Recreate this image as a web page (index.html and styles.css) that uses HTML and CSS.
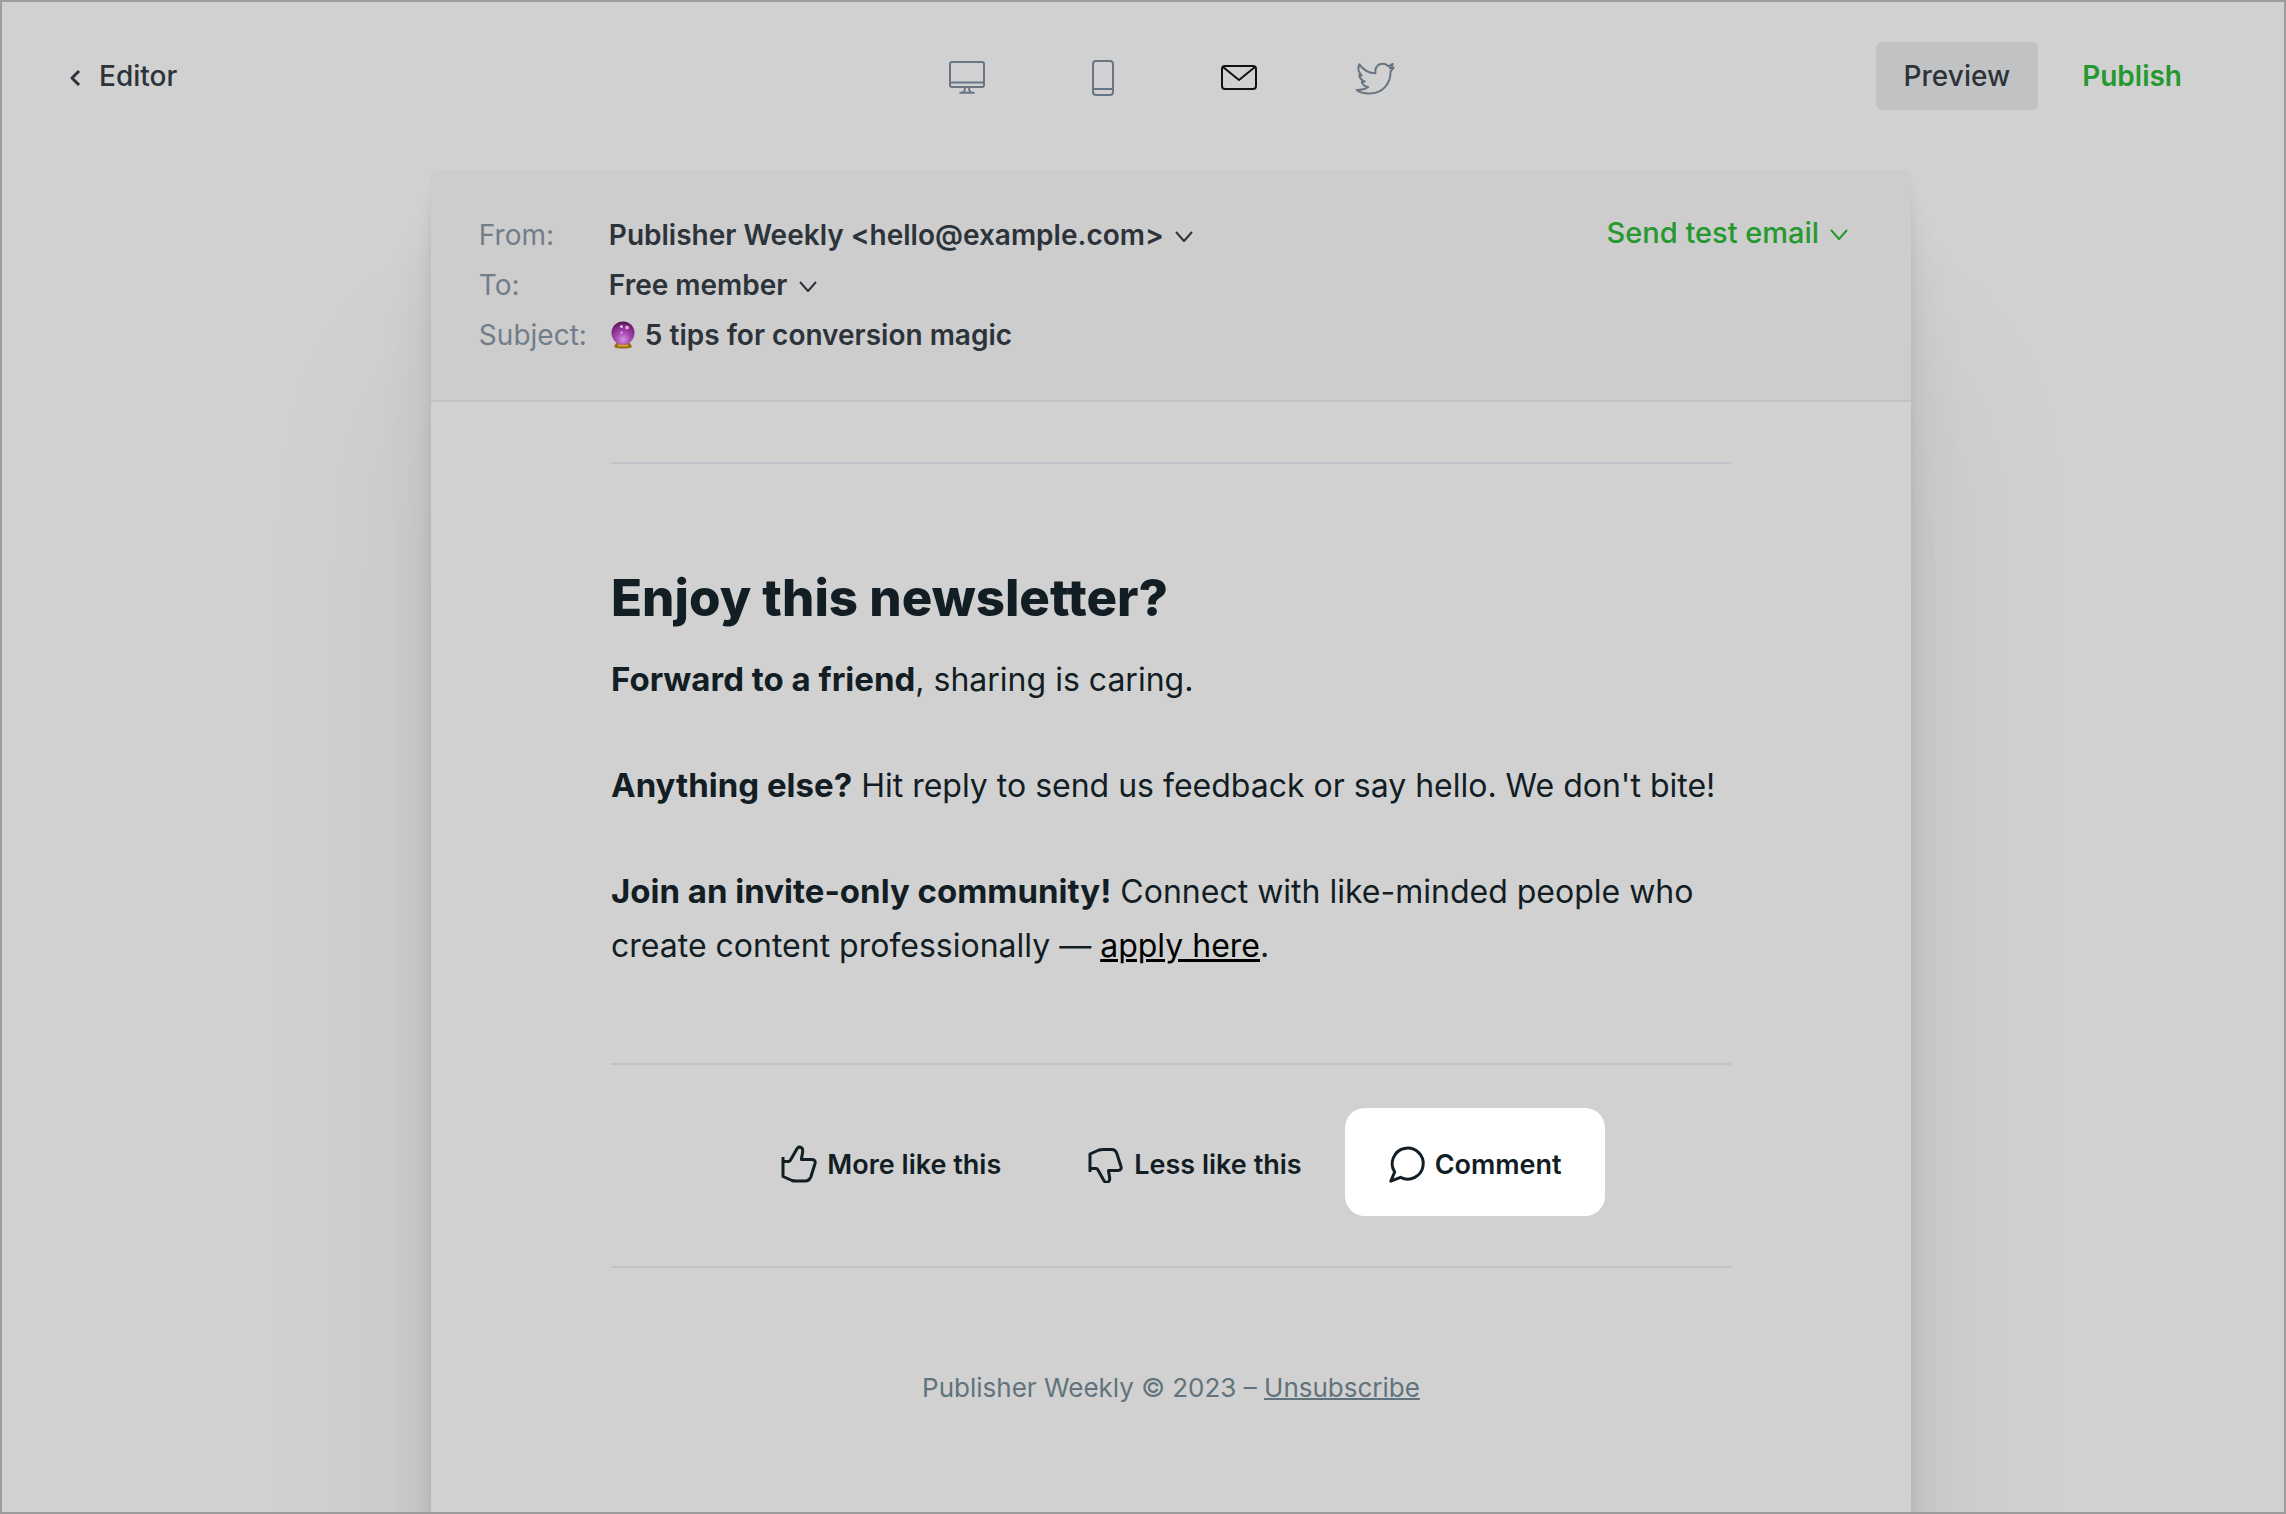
FILE: index.html
```html
<!DOCTYPE html>
<html lang="en">
<head>
    <meta charset="UTF-8">
    <meta name="viewport" content="width=device-width, initial-scale=1.0">
    <title>Email preview</title>
    <link rel="stylesheet" href="styles.css">
</head>
<body>

    <header class="topbar">
        <a class="back" href="#editor">
            <svg width="12" height="18" viewBox="0 0 12 18"><path d="M10 2 3 9l7 7"/></svg>
            Editor
        </a>

        <nav class="devices">
            <button type="button" aria-label="Desktop">
                <svg width="40" height="40" viewBox="0 0 40 40">
                    <rect x="3" y="4" width="34" height="25" rx="2"/>
                    <path d="M3 24.500h34M18 29.500c0 3-1 5-3 5M22 29.500c0 3 1 5 3 5M12.500 34.800h15"/>
                </svg>
            </button>
            <button type="button" aria-label="Mobile">
                <svg width="40" height="40" viewBox="0 0 40 40">
                    <rect x="10" y="3" width="20" height="34" rx="3"/>
                    <path d="M10 31h20"/>
                </svg>
            </button>
            <button type="button" class="active" aria-label="Email">
                <svg width="40" height="40" viewBox="0 0 40 40">
                    <rect x="3" y="8" width="34" height="23" rx="3"/>
                    <path d="M4 9l16 13L36 9"/>
                </svg>
            </button>
            <button type="button" aria-label="Twitter">
                <svg width="40" height="40" viewBox="0 0 40 40">
                    <path d="M4.300 6.300C8 11.500 13 15 20.500 15.300 19.500 9.500 23 5.700 27.500 5.700c2.500 0 4.500.8 6 2.600L37.700 6l-.9 3 1.900.7-3.200 3.800C36 25 28 35.500 14 35.500c-5 0-9.500-1.200-12.300-3.500 4 .3 8-.5 11.500-3-3.200-.5-5.700-2-6.500-5l3-.5C6.500 22 4.300 20 4.300 17l2.500.5C3 14 2.300 10.500 4.300 6.300z"/>
                    <path d="M34 10h3"/>
                </svg>
            </button>
        </nav>

        <div class="actions">
            <button type="button" class="preview">Preview</button>
            <button type="button" class="publish">Publish</button>
        </div>
    </header>

    <main class="email">
        <div class="email-header">
            <div class="fields">
                <div class="field">
                    <label for="from">From:</label>
                    <select id="from"><option>Publisher Weekly &lt;hello@example.com&gt;</option></select>
                    <svg class="chevron" width="20" height="14" viewBox="0 0 20 14"><path d="M2 3l8 9 8-9"/></svg>
                </div>
                <div class="field">
                    <label for="to">To:</label>
                    <select id="to"><option>Free member</option></select>
                    <svg class="chevron" width="20" height="14" viewBox="0 0 20 14"><path d="M2 3l8 9 8-9"/></svg>
                </div>
                <div class="field">
                    <span class="name">Subject:</span>
                    <svg class="ball" width="28" height="28" viewBox="0 0 28 28">
                        <defs>
                            <radialGradient id="glass" cx="50%" cy="78%" r="75%">
                                <stop offset="0" stop-color="#d294d8"/>
                                <stop offset="0.400" stop-color="#a94bb5"/>
                                <stop offset="0.800" stop-color="#802781"/>
                                <stop offset="1" stop-color="#521450"/>
                            </radialGradient>
                        </defs>
                        <path d="M7 22h14l2 4c-4 2-14 2-18 0z" fill="#9a6b14"/>
                        <path d="M9 24.500h10" stroke="#d2a33c" stroke-width="2"/>
                        <circle cx="14" cy="12" r="11.500" fill="url(#glass)"/>
                        <circle cx="12.500" cy="5.500" r="1.500" fill="#e6c4e6"/>
                        <circle cx="18" cy="6.500" r="2" fill="#d9a5da"/>
                        <circle cx="12.500" cy="11.500" r="1" fill="#e6c4e6"/>
                    </svg>
                    <span class="value">5 tips for conversion magic</span>
                </div>
            </div>
            <button type="button" class="send-test">
                Send test email
                <svg class="chevron" width="20" height="14" viewBox="0 0 20 14"><path d="M2 3l8 9 8-9"/></svg>
            </button>
        </div>

        <article class="content">
            <section class="message">
                <h1>Enjoy this newsletter?</h1>
                <p><strong>Forward to a friend</strong>, sharing is caring.</p>
                <p><strong>Anything else?</strong> Hit reply to send us feedback or say hello. We don't bite!</p>
                <p><strong>Join an invite-only community!</strong> Connect with like-minded people who create content professionally — <a href="#apply">apply here</a>.</p>
            </section>

            <div class="feedback">
                <button type="button">
                    <svg width="38" height="38" viewBox="0 0 38 38"><path d="M3 12v19.500l9 4c1.200.5 2.500.5 4 .5h9c3 0 5-1.500 6-4.500l4-13c.7-2.500-.5-4-3-4H21.500c0-3 1.200-5.500 1.200-9 0-3.500-4-4.500-5.700-1.800L10.500 15c-.5 1-1.200 1.500-2 1.500H3"/></svg>
                    More like this
                </button>
                <button type="button">
                    <svg width="38" height="38" viewBox="0 0 38 38"><path d="M3 27V9l9-4c1.200-.5 2.500-.5 4-.5h8.500c3 0 4.700 1.500 5.500 4.500l4 12.500c.7 2.500-.5 4-3 4H21.500c0 3 1.200 5 1.200 8.500 0 3.500-4 4.500-5.700 1.800L11 25c-.5-1-1.200-1.500-2-1.500H3"/></svg>
                    Less like this
                </button>
                <button type="button" class="highlight">
                    <svg width="38" height="38" viewBox="0 0 38 38"><path d="M12.500 32.300A15.500 15.500 0 1 0 6.700 27L2.800 36.200z"/></svg>
                    Comment
                </button>
            </div>

            <footer>Publisher Weekly © 2023 – <a href="#unsubscribe">Unsubscribe</a></footer>
        </article>
    </main>

</body>
</html>
```

FILE: styles.css
```css
* {
    box-sizing: border-box;
}

body {
    display: flex;
    flex-direction: column;
    min-height: 100vh;
    margin: 0;
    padding-left: 56px;
    border: 2px solid #9c9c9c;
    background: #d1d1d1;
    color: #2c333a;
    font-family: Inter, sans-serif;
    font-size: 28px;
    line-height: 40px;
    overflow: hidden;
}

button, select {
    margin: 0;
    padding: 0;
    border: 0;
    background: none;
    color: inherit;
    font: inherit;
    cursor: pointer;
}

svg {
    flex: none;
    fill: none;
    stroke: currentColor;
    stroke-width: 2;
    stroke-linejoin: round;
}

/* Top bar */
.topbar {
    display: grid;
    grid-template-columns: 1fr auto 1fr;
    align-items: center;
    height: 148px;
}

.back {
    display: flex;
    align-items: center;
    gap: 18px;
    padding-left: 11px;
    color: inherit;
    font-weight: 500;
    text-decoration: none;
}

.back svg {
    margin-top: 4px;
    stroke-width: 3;
}

.devices {
    display: flex;
    gap: 96px;
    padding-top: 4px;
    color: #687582;
}

.devices button {
    display: flex;
}

.devices .active {
    color: #111;
}

.actions {
    display: flex;
    justify-content: flex-end;
    gap: 16px;
    padding-right: 74px;
    font-weight: 500;
}

.actions button {
    height: 68px;
    padding: 0 28px;
    border-radius: 6px;
}

.actions .preview {
    background: #c1c2c4;
}

.actions .publish {
    color: #25992f;
    font-weight: 600;
}

/* Email card */
.email {
    display: flex;
    flex: 1;
    flex-direction: column;
    align-self: center;
    width: 66.5%;
    margin-top: 20px;
    border-radius: 6px 6px 0 0;
    background: #d1d1d1;
    box-shadow:
        0 6px 4px rgba(0, 0, 0, 0.02),
        0 13px 11px rgba(0, 0, 0, 0.03),
        0 25px 20px rgba(0, 0, 0, 0.03),
        0 45px 36px rgba(0, 0, 0, 0.04),
        0 84px 67px rgba(0, 0, 0, 0.05),
        0 200px 190px rgba(0, 0, 0, 0.08);
}

.email-header {
    display: flex;
    justify-content: space-between;
    align-items: flex-start;
    padding: 40px 62px 40px 48px;
    border-bottom: 2px solid #c3c3c3;
    border-radius: 6px 6px 0 0;
    background: #cdcdcd;
}

.field {
    display: flex;
    align-items: center;
    height: 50px;
    font-weight: 600;
}

.field label,
.field .name {
    width: 130px;
    color: #717e8a;
    font-weight: 400;
}

.field select {
    appearance: none;
}

.chevron {
    margin-top: 2px;
}

.field .chevron {
    margin-left: 10px;
}

.ball {
    margin-right: 8px;
    stroke: none;
}

.send-test {
    display: flex;
    align-items: center;
    gap: 10px;
    height: 46px;
    color: #25992f;
    font-size: 29px;
    font-weight: 500;
}

.content {
    width: 100%;
    max-width: 1120px;
    margin: 60px auto 0;
    border-top: 2px solid #bdc3c9;
    color: #121d24;
}

.message {
    padding: 101px 0 90px;
    border-bottom: 2px solid #bdc3c9;
    font-size: 32px;
    line-height: 54px;
}

.message h1 {
    margin: 0 0 21px;
    font-size: 51px;
    font-weight: 800;
    line-height: 66px;
}

.message p {
    margin: 0 0 51px;
}

.message p:last-child {
    margin-bottom: 0;
}

.message strong {
    font-size: 33px;
}

.message a {
    color: #000;
    text-decoration-thickness: 3px;
}

.feedback {
    display: flex;
    justify-content: center;
    padding: 43px 0 50px;
    border-bottom: 2px solid #bdc3c9;
}

.feedback button {
    display: flex;
    align-items: center;
    gap: 9px;
    height: 108px;
    padding: 6px 43px 0;
    border-radius: 20px;
    font-size: 27px;
    font-weight: 600;
}

.feedback svg {
    margin-bottom: 2px;
    stroke-width: 3;
}

.feedback .highlight {
    background: #fff;
}

footer {
    padding: 100px 0;
    color: #61737c;
    font-size: 26px;
    text-align: center;
}

footer a {
    color: inherit;
    text-decoration-thickness: 2px;
}
```
